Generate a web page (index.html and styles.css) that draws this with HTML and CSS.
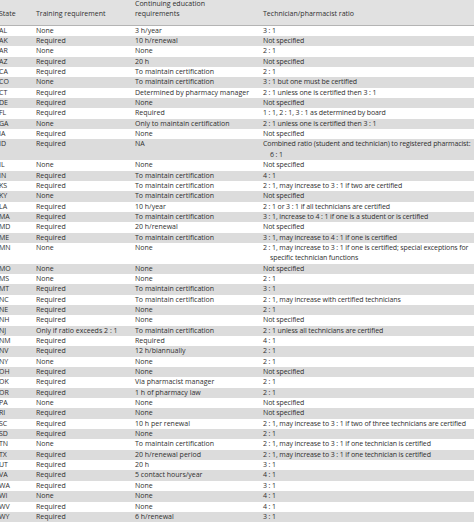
FILE: index.html
```html
<!DOCTYPE html>
<html>
<head>
<meta charset="utf-8">
<link rel="stylesheet" href="styles.css">
</head>
<body>
<div class="table">
  <div class="head">
    <div class="c1">State</div>
    <div class="c2">Training requirement</div>
    <div class="c3">Continuing education<br>requirements</div>
    <div class="c4">Technician/pharmacist ratio</div>
  </div>
  <div class="body">
    <div class="row"><div class="c1">AL</div><div class="c2">None</div><div class="c3">3 h/year</div><div class="c4">3 : 1</div></div>
    <div class="row"><div class="c1">AK</div><div class="c2">Required</div><div class="c3">10 h/renewal</div><div class="c4">Not specified</div></div>
    <div class="row"><div class="c1">AR</div><div class="c2">None</div><div class="c3">None</div><div class="c4">2 : 1</div></div>
    <div class="row"><div class="c1">AZ</div><div class="c2">Required</div><div class="c3">20 h</div><div class="c4">Not specified</div></div>
    <div class="row"><div class="c1">CA</div><div class="c2">Required</div><div class="c3">To maintain certification</div><div class="c4">2 : 1</div></div>
    <div class="row"><div class="c1">CO</div><div class="c2">None</div><div class="c3">To maintain certification</div><div class="c4">3 : 1 but one must be certified</div></div>
    <div class="row"><div class="c1">CT</div><div class="c2">Required</div><div class="c3">Determined by pharmacy manager</div><div class="c4">2 : 1 unless one is certified then 3 : 1</div></div>
    <div class="row"><div class="c1">DE</div><div class="c2">Required</div><div class="c3">None</div><div class="c4">Not specified</div></div>
    <div class="row"><div class="c1">FL</div><div class="c2">Required</div><div class="c3">Required</div><div class="c4">1 : 1, 2 : 1, 3 : 1 as determined by board</div></div>
    <div class="row"><div class="c1">GA</div><div class="c2">None</div><div class="c3">Only to maintain certification</div><div class="c4">2 : 1 unless one is certified then 3 : 1</div></div>
    <div class="row"><div class="c1">IA</div><div class="c2">Required</div><div class="c3">None</div><div class="c4">Not specified</div></div>
    <div class="row"><div class="c1">ID</div><div class="c2">Required</div><div class="c3">NA</div><div class="c4">Combined ratio (student and technician) to registered pharmacist:<br>6 : 1</div></div>
    <div class="row"><div class="c1">IL</div><div class="c2">None</div><div class="c3">None</div><div class="c4">Not specified</div></div>
    <div class="row"><div class="c1">IN</div><div class="c2">Required</div><div class="c3">To maintain certification</div><div class="c4">4 : 1</div></div>
    <div class="row"><div class="c1">KS</div><div class="c2">Required</div><div class="c3">To maintain certification</div><div class="c4">2 : 1, may increase to 3 : 1 if two are certified</div></div>
    <div class="row"><div class="c1">KY</div><div class="c2">None</div><div class="c3">To maintain certification</div><div class="c4">Not specified</div></div>
    <div class="row"><div class="c1">LA</div><div class="c2">Required</div><div class="c3">10 h/year</div><div class="c4">2 : 1 or 3 : 1 if all technicians are certified</div></div>
    <div class="row"><div class="c1">MA</div><div class="c2">Required</div><div class="c3">To maintain certification</div><div class="c4">3 : 1, increase to 4 : 1 if one is a student or is certified</div></div>
    <div class="row"><div class="c1">MD</div><div class="c2">Required</div><div class="c3">20 h/renewal</div><div class="c4">Not specified</div></div>
    <div class="row"><div class="c1">ME</div><div class="c2">Required</div><div class="c3">To maintain certification</div><div class="c4">3 : 1, may increase to 4 : 1 if one is certified</div></div>
    <div class="row"><div class="c1">MN</div><div class="c2">None</div><div class="c3">None</div><div class="c4">2 : 1, may increase to 3 : 1 if one is certified; special exceptions for<br>specific technician functions</div></div>
    <div class="row"><div class="c1">MO</div><div class="c2">None</div><div class="c3">None</div><div class="c4">Not specified</div></div>
    <div class="row"><div class="c1">MS</div><div class="c2">None</div><div class="c3">None</div><div class="c4">2 : 1</div></div>
    <div class="row"><div class="c1">MT</div><div class="c2">Required</div><div class="c3">To maintain certification</div><div class="c4">3 : 1</div></div>
    <div class="row"><div class="c1">NC</div><div class="c2">Required</div><div class="c3">To maintain certification</div><div class="c4">2 : 1, may increase with certified technicians</div></div>
    <div class="row"><div class="c1">NE</div><div class="c2">Required</div><div class="c3">None</div><div class="c4">2 : 1</div></div>
    <div class="row"><div class="c1">NH</div><div class="c2">Required</div><div class="c3">None</div><div class="c4">Not specified</div></div>
    <div class="row"><div class="c1">NJ</div><div class="c2">Only if ratio exceeds 2 : 1</div><div class="c3">To maintain certification</div><div class="c4">2 : 1 unless all technicians are certified</div></div>
    <div class="row"><div class="c1">NM</div><div class="c2">Required</div><div class="c3">Required</div><div class="c4">4 : 1</div></div>
    <div class="row"><div class="c1">NV</div><div class="c2">Required</div><div class="c3">12 h/biannually</div><div class="c4">2 : 1</div></div>
    <div class="row"><div class="c1">NY</div><div class="c2">None</div><div class="c3">None</div><div class="c4">2 : 1</div></div>
    <div class="row"><div class="c1">OH</div><div class="c2">Required</div><div class="c3">None</div><div class="c4">Not specified</div></div>
    <div class="row"><div class="c1">OK</div><div class="c2">Required</div><div class="c3">Via pharmacist manager</div><div class="c4">2 : 1</div></div>
    <div class="row"><div class="c1">OR</div><div class="c2">Required</div><div class="c3">1 h of pharmacy law</div><div class="c4">2 : 1</div></div>
    <div class="row"><div class="c1">PA</div><div class="c2">None</div><div class="c3">None</div><div class="c4">Not specified</div></div>
    <div class="row"><div class="c1">RI</div><div class="c2">Required</div><div class="c3">None</div><div class="c4">Not specified</div></div>
    <div class="row"><div class="c1">SC</div><div class="c2">Required</div><div class="c3">10 h per renewal</div><div class="c4">2 : 1, may increase to 3 : 1 if two of three technicians are certified</div></div>
    <div class="row"><div class="c1">SD</div><div class="c2">Required</div><div class="c3">None</div><div class="c4">2 : 1</div></div>
    <div class="row"><div class="c1">TN</div><div class="c2">None</div><div class="c3">To maintain certification</div><div class="c4">2 : 1, may increase to 3 : 1 if one technician is certified</div></div>
    <div class="row"><div class="c1">TX</div><div class="c2">Required</div><div class="c3">20 h/renewal period</div><div class="c4">2 : 1, may increase to 3 : 1 if one technician is certified</div></div>
    <div class="row"><div class="c1">UT</div><div class="c2">Required</div><div class="c3">20 h</div><div class="c4">3 : 1</div></div>
    <div class="row"><div class="c1">VA</div><div class="c2">Required</div><div class="c3">5 contact hours/year</div><div class="c4">4 : 1</div></div>
    <div class="row"><div class="c1">WA</div><div class="c2">Required</div><div class="c3">None</div><div class="c4">3 : 1</div></div>
    <div class="row"><div class="c1">WI</div><div class="c2">None</div><div class="c3">None</div><div class="c4">4 : 1</div></div>
    <div class="row"><div class="c1">WV</div><div class="c2">Required</div><div class="c3">None</div><div class="c4">4 : 1</div></div>
    <div class="row"><div class="c1">WY</div><div class="c2">Required</div><div class="c3">6 h/renewal</div><div class="c4">3 : 1</div></div>
  </div>
</div>
</body>
</html>
```
FILE: styles.css
```css
html, body {
  margin: 0;
  padding: 0;
  background: #ffffff;
  overflow: hidden;
}
.table {
  margin: -1px 0 0 -1px;
  font-family: "Open Sans", "Noto Sans", sans-serif;
  font-size: 7px;
  line-height: 10.34px;
  color: #2f2f2f;
}
.head, .row {
  display: grid;
  grid-template-columns: 37px 99px 128px 1fr;
}
.head {
  background: #e1e1e1;
  align-items: end;
  padding-bottom: 5px;
  border-bottom: 1px solid #b4b4b4;
}
.row:nth-child(even) {
  background: #dcdcdc;
}
.c4 {
  white-space: nowrap;
  padding-left: 7px;
  text-indent: -7px;
  letter-spacing: -0.12px;
}
.head .c4 {
  padding-left: 0;
  text-indent: 0;
  letter-spacing: 0;
}
```
